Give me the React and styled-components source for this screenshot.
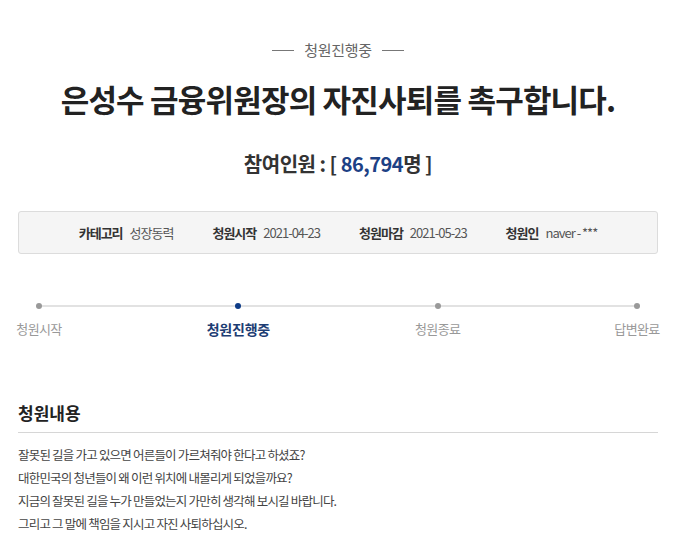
import React from 'react';
import styled, { createGlobalStyle } from 'styled-components';

const GlobalStyle = createGlobalStyle`
    html, body {
        margin: 0;
        padding: 0;
        background: #fff;
    }
    body {
        font-family: "Noto Sans CJK KR", "Noto Sans", sans-serif;
        color: #333;
    }
`;

const Page = styled.div`
    width: 680px;
    padding: 0 22px 0 18px;
    box-sizing: border-box;
`;

const Status = styled.div`
    display: flex;
    align-items: center;
    justify-content: center;
    gap: 10px;
    padding-top: 38px;
    font-size: 15px;
    color: #666;
    line-height: 24px;
    letter-spacing: -0.3px;

    &::before,
    &::after {
        content: '';
        width: 22px;
        height: 1px;
        background: #777;
    }
`;

const Title = styled.h1`
    margin: 15px 0 0;
    text-align: center;
    font-size: 31px;
    font-weight: 700;
    color: #222;
    letter-spacing: -0.8px;
    line-height: 44px;
`;

const Count = styled.div`
    margin-top: 30px;
    text-align: center;
    font-size: 20px;
    font-weight: 700;
    color: #333;
    line-height: 26px;
    letter-spacing: -0.5px;
`;

const Number = styled.span`
    color: #1d4185;
`;

const InfoBox = styled.ul`
    list-style: none;
    margin: 34px 0 0;
    padding: 0;
    height: 43px;
    display: flex;
    align-items: center;
    justify-content: center;
    gap: 39px;
    background: #f5f5f5;
    border: 1px solid #dcdcdc;
    border-radius: 3px;
    box-sizing: border-box;
    font-size: 13px;
`;

const InfoItem = styled.li`
    display: flex;
    align-items: baseline;
    gap: 7px;
`;

const InfoLabel = styled.strong`
    font-weight: 700;
    color: #333;
    letter-spacing: -1px;
`;

const InfoValue = styled.span`
    color: #555;
    letter-spacing: -1px;
`;

const Steps = styled.ol`
    position: relative;
    list-style: none;
    margin: 48px 0 0;
    padding: 0;
    display: flex;
    justify-content: space-between;

    &::before {
        content: '';
        position: absolute;
        left: 21px;
        right: 21px;
        top: 3px;
        height: 2px;
        background: #e2e2e2;
    }
`;

const Step = styled.li`
    position: relative;
    width: 42px;
    display: flex;
    flex-direction: column;
    align-items: center;
    gap: 11px;
`;

const Dot = styled.span`
    width: 6px;
    height: 6px;
    margin-top: 1px;
    border-radius: 50%;
    background: ${(props) => (props.active ? '#0d3b86' : '#999')};
`;

const StepLabel = styled.span`
    white-space: nowrap;
    font-size: ${(props) => (props.active ? '14px' : '13px')};
    line-height: 18px;
    letter-spacing: ${(props) => (props.active ? '-0.2px' : '-0.6px')};
    font-weight: ${(props) => (props.active ? 700 : 400)};
    color: ${(props) => (props.active ? '#1d3d73' : '#999')};
`;

const Section = styled.section`
    margin-top: 63px;
`;

const SectionTitle = styled.h2`
    margin: 0;
    padding-bottom: 7px;
    font-size: 17px;
    font-weight: 700;
    color: #222;
    line-height: 24px;
    border-bottom: 1px solid #d6d6d6;
`;

const Body = styled.div`
    padding-top: 10px;
    font-size: 12.5px;
    line-height: 23px;
    color: #444;
    letter-spacing: -0.8px;
`;

const info = [
    ['카테고리', '성장동력'],
    ['청원시작', '2021-04-23'],
    ['청원마감', '2021-05-23'],
    ['청원인', 'naver - ***']
];

const steps = ['청원시작', '청원진행중', '청원종료', '답변완료'];

const lines = [
    '잘못된 길을 가고 있으면 어른들이 가르쳐줘야 한다고 하셨죠?',
    '대한민국의 청년들이 왜 이런 위치에 내몰리게 되었을까요?',
    '지금의 잘못된 길을 누가 만들었는지 가만히 생각해 보시길 바랍니다.',
    '그리고 그 말에 책임을 지시고 자진 사퇴하십시오.'
];

export default function App() {
    return (
        <Page>
            <GlobalStyle />
            <Status>청원진행중</Status>
            <Title>은성수 금융위원장의 자진사퇴를 촉구합니다.</Title>
            <Count>
                참여인원 : [ <Number>86,794</Number>명 ]
            </Count>
            <InfoBox>
                {info.map(([label, value]) => (
                    <InfoItem key={label}>
                        <InfoLabel>{label}</InfoLabel>
                        <InfoValue>{value}</InfoValue>
                    </InfoItem>
                ))}
            </InfoBox>
            <Steps>
                {steps.map((label, i) => (
                    <Step key={label}>
                        <Dot active={i === 1} />
                        <StepLabel active={i === 1}>{label}</StepLabel>
                    </Step>
                ))}
            </Steps>
            <Section>
                <SectionTitle>청원내용</SectionTitle>
                <Body>
                    {lines.map((line) => (
                        <div key={line}>{line}</div>
                    ))}
                </Body>
            </Section>
        </Page>
    );
}
